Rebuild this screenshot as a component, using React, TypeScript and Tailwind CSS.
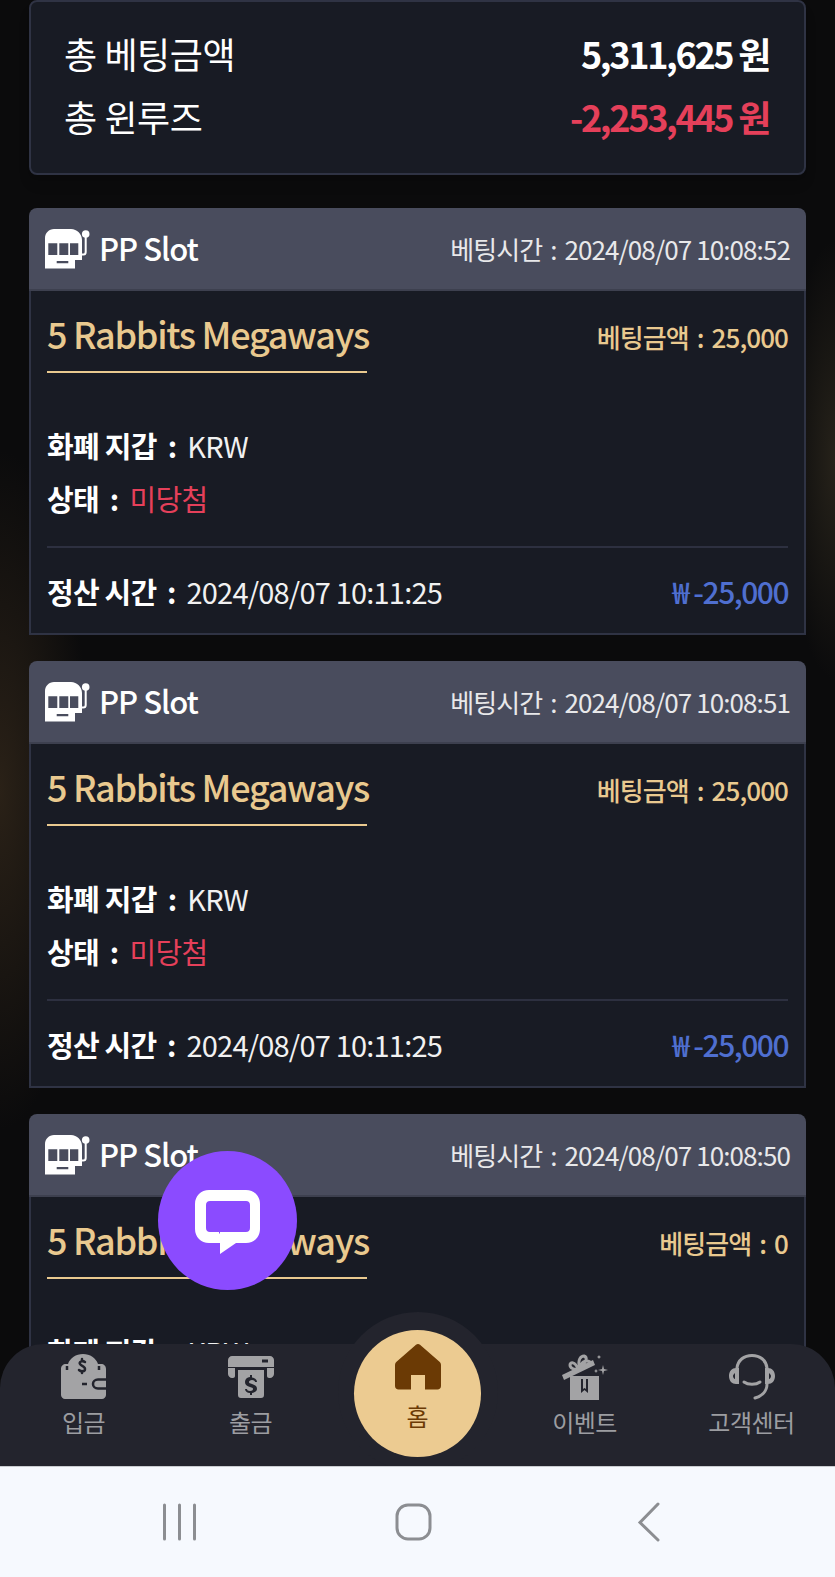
const font = "font-['Noto_Sans_CJK_KR','Noto_Sans',sans-serif]";

const bets = [
  { time: "2024/08/07 10:08:52", amount: "25,000" },
  { time: "2024/08/07 10:08:51", amount: "25,000" },
  { time: "2024/08/07 10:08:50", amount: "0" },
];

function SlotIcon() {
  return (
    <svg width="46" height="40" viewBox="0 0 46 40" fill="none">
      <path
        fillRule="evenodd"
        fill="#fff"
        d="M9 0h17c6 0 11 5 11 11v20h-7v8.500H0V9c0-5 4-9 9-9zM3.300 14.300V26h9V14.300h-9zm11 0V26h9V14.300h-9zm10.700 0V26h8.300V14.300H25zM11.700 32v2.200h11.600V32H11.700z"
      />
      <circle cx="40.700" cy="5" r="3.800" fill="#fff" />
      <path d="M40.700 8v15c0 1.500-1 2.500-2.500 2.500H37" stroke="#fff" strokeWidth="2" />
    </svg>
  );
}

function WalletIcon() {
  return (
    <svg width="46" height="46" viewBox="0 0 46 46" fill="#a3a3a5">
      <path d="M22 0c7 0 13 4 15 10h3c3 0 5 2 5 5v26c0 2-2 4-4 4H4c-2 0-4-2-4-4V15c0-3 2-5 5-5h2C9 4 15 0 22 0z" />
      <path
        fill="none"
        stroke="#23242d"
        strokeWidth="2.500"
        strokeLinecap="round"
        d="M24 8c-3-2-6 0-5 2s5 2 5 5-4 3-6 1M21 5v2M21 17v2"
      />
      <path fill="none" stroke="#23242d" strokeWidth="2.500" d="M46 25.500H37c-3 0-5 2-5 4.500s2 4.500 5 4.500h9" />
      <path fill="none" stroke="#23242d" strokeWidth="2.500" d="M21 30h5M6 16v-4M38 16v-4" />
    </svg>
  );
}

function AtmIcon() {
  return (
    <svg width="46" height="42" viewBox="0 0 46 42" fill="#a3a3a5">
      <path
        fillRule="evenodd"
        d="M4 0h38c2 0 4 2 4 4v7H0V4c0-2 2-4 4-4zm30 3.500v3h6v-3h-6z"
      />
      <path d="M0 12h7v8c0 1-1 2-2 2H4c-2 0-4-2-4-4v-6zM39 12h7v6c0 2-2 4-4 4h-1c-1 0-2-1-2-2v-8z" />
      <path
        fillRule="evenodd"
        d="M10 14h26v25c0 2-1 3-3 3H13c-2 0-3-1-3-3V14zm12 5v2c-3 .500-5 2-5 5s2 4 5 5c2 .500 3 1 3 2s-1 2-3 2-3-1-3-2h-2c0 2 2 4 5 4v2h2v-2c3-.500 5-2 5-4 0-3-2-4-5-5-2-.500-3-1-3-2s1-2 3-2 3 1 3 2h2c0-2-2-4-5-4.500V19h-2z"
      />
    </svg>
  );
}

function GiftIcon() {
  return (
    <svg width="46" height="46" viewBox="0 0 46 46" fill="#a3a3a5">
      <path
        fillRule="evenodd"
        d="M8 22h29v24H8V22zm11 3v14l3.500-3 3.500 3V25h-2v10l-1.500-1-1.500 1V25h-2z"
      />
      <path d="M0 21l31-15 2 5-31 15z" />
      <path
        fill="none"
        stroke="#a3a3a5"
        strokeWidth="3"
        d="M16 15c-4 1-8-1-8-4s5-4 8 4zm2-2c-3-7 1-11 4-11 3 1 4 6-4 11zm1-1c1-5 6-6 9-4 1 2-1 5-9 4z"
      />
      <path d="M41 11l1 4 4 1-4 1-1 4-1-4-4-1 4-1zM34 15l.800 1.500 1.200.500-1.200.500L34 19l-.800-1.500L32 17l1.200-.500zM37 1l.700 1.300L39 3l-1.300.700L37 5l-.700-1.300L35 3l1.300-.700z" />
    </svg>
  );
}

function HeadsetIcon() {
  return (
    <svg width="46" height="46" viewBox="0 0 46 46" fill="none" stroke="#a3a3a5" strokeWidth="3" strokeLinecap="round">
      <path d="M8 14C9 6 15 1.500 23 1.500S37 6 38 14" />
      <path d="M15 28c4 3 12 3 16 0" />
      <path d="M38 30c0 7-5 12-12 14" />
      <path
        fill="#a3a3a5"
        stroke="none"
        fillRule="evenodd"
        d="M7 14h3v16H7c-4 0-7-3-7-8s3-8 7-8zm-1 5c-1 1-2 2-2 3s1 3 2 3v-6zM36 14h3c4 0 7 3 7 8s-3 8-7 8h-3V14zm4 5v6c1 0 2-2 2-3s-1-2-2-3z"
      />
    </svg>
  );
}

function HomeIcon() {
  return (
    <svg width="46" height="46" viewBox="0 0 46 46" fill="#6b3a05">
      <path
        fillRule="evenodd"
        d="M21 .800c1.200-1 2.800-1 4 0l19.500 17c1 1 1.500 2 1.500 3.500V42c0 2-1.500 3.500-3.500 3.500H30V31H16v14.500H3.500C1.500 45.500 0 44 0 42V21.300c0-1.500.500-2.500 1.500-3.500z"
      />
    </svg>
  );
}

function ChatIcon() {
  return (
    <svg width="66" height="66" viewBox="0 0 66 66" fill="none">
      <path
        fillRule="evenodd"
        fill="#fff"
        d="M14 0h37c8 0 14 6 14 14v25c0 8-6 14-14 14H41L25 64V53H14C6 53 0 47 0 39V14C0 6 6 0 14 0zm1 11c-2.500 0-4 1.500-4 4v23c0 2.500 1.500 4 4 4h9v1.500h1V42h26c2.500 0 4-1.500 4-4V15c0-2.500-1.500-4-4-4H15z"
      />
    </svg>
  );
}

function Colon({ gap }: { gap: string }) {
  return <span className={gap}>:</span>;
}

function BetCard({ time, amount }: { time: string; amount: string }) {
  return (
    <div className="mb-[26px]">
      <div className="flex h-[83px] items-center justify-between rounded-t-lg border-b-2 border-[#3d404f] bg-[#494c5d] pr-[16px] pl-[16px]">
        <div className="flex items-center gap-[8px]">
          <SlotIcon />
          <span className="text-[31px] font-medium tracking-[-1px] text-white">PP Slot</span>
        </div>
        <span className="text-[26px] tracking-[-0.9px] text-[#e8e8ea]">
          베팅시간 <Colon gap="mx-[3px]" /> {time}
        </span>
      </div>
      <div className="h-[344px] border-2 border-t-0 border-[#2f3344] bg-[#181b24] px-[16px]">
        <div className="flex items-start justify-between">
          <h3 className="mt-[15px] w-[320px] border-b-2 border-[#e9c98f] pb-[11px] text-[36px] leading-[54px] font-medium tracking-[-1.3px] whitespace-nowrap text-[#e9c98f]">
            5 Rabbits Megaways
          </h3>
          <span className="mt-[26px] text-[26px] font-medium tracking-[-0.9px] text-[#e9c98f]">
            베팅금액 <Colon gap="mx-[3px]" /> {amount}
          </span>
        </div>
        <div className="mt-[46px] text-[29px] leading-[53px] tracking-[-0.7px] text-[#f1f1f1]">
          <p>
            <b className="font-bold text-white">
              화폐 지갑 <Colon gap="mx-[5px]" />{" "}
            </b>
            KRW
          </p>
          <p>
            <b className="font-bold text-white">
              상태 <Colon gap="mx-[5px]" />{" "}
            </b>
            <span className="text-[#e5405a]">미당첨</span>
          </p>
        </div>
        <div className="mt-[21px] flex h-[89px] items-center justify-between border-t-2 border-[#2d3040] text-[29px] tracking-[-0.8px] text-[#f1f1f1]">
          <p>
            <b className="font-bold text-white">
              정산 시간 <Colon gap="mx-[5px]" />{" "}
            </b>
            2024/08/07 10:11:25
          </p>
          <span className="text-[30px] font-medium tracking-[-1.5px] text-[#4f6fd0]">₩ -25,000</span>
        </div>
      </div>
    </div>
  );
}

function NavItem({ icon, label }: { icon: React.ReactNode; label: string }) {
  return (
    <div className="flex w-[167px] flex-col items-center">
      <div className="flex h-[46px] items-center">{icon}</div>
      <span className="mt-[5px] text-[24px] leading-[34px] tracking-[-0.5px] text-[#9c9da1]">{label}</span>
    </div>
  );
}

export default function App() {
  return (
    <div className={`${font} flex h-[1577px] w-[835px] flex-col overflow-hidden bg-[#0b0b0c]`}>
      <div className="relative h-[1466px] overflow-hidden bg-[radial-gradient(ellipse_90px_340px_at_0px_790px,#2a2117,transparent),radial-gradient(ellipse_50px_220px_at_835px_460px,#26221a,transparent)]">
        <div className="px-[29px]">
          <div className="mb-[33px] flex h-[175px] flex-col justify-center gap-[10px] rounded-lg border-2 border-[#2f3344] bg-[#181b24] px-[33px] pt-[3px] pb-[9px] shadow-lg">
            <div className="flex items-center justify-between text-[36px] leading-[53px] text-white">
              <span className="tracking-[-0.4px]">총 베팅금액</span>
              <span className="mr-[2px] font-bold tracking-[-2.3px]">5,311,625 원</span>
            </div>
            <div className="flex items-center justify-between text-[36px] leading-[53px] text-white">
              <span className="tracking-[-0.4px]">총 윈루즈</span>
              <span className="mr-[2px] font-bold tracking-[-2.3px] text-[#e5405a]">-2,253,445 원</span>
            </div>
          </div>
          {bets.map((bet) => (
            <BetCard key={bet.time} time={bet.time} amount={bet.amount} />
          ))}
        </div>

        {/* floating chat button */}
        <div className="absolute top-[1151px] left-[158px] z-20 flex h-[139px] w-[139px] items-center justify-center rounded-full bg-[#8b4bff] pt-[4px]">
          <ChatIcon />
        </div>

        {/* bottom nav */}
        <div className="absolute right-0 bottom-0 left-0 z-10 flex h-[122px] items-start justify-between rounded-t-[44px] bg-[#23242d] pt-[10px]">
          <NavItem icon={<WalletIcon />} label="입금" />
          <NavItem icon={<AtmIcon />} label="출금" />
          <div className="w-[167px]" />
          <NavItem icon={<GiftIcon />} label="이벤트" />
          <NavItem icon={<HeadsetIcon />} label="고객센터" />
        </div>
        <div className="absolute top-[1312px] left-[338px] z-10 h-[160px] w-[160px] rounded-full bg-[#23242d]" />
        <div className="absolute top-[1330px] left-[354px] z-10 flex h-[127px] w-[127px] flex-col items-center rounded-full bg-[#eccb91] pt-[14px]">
          <HomeIcon />
          <span className="mt-[9px] text-[24px] leading-[34px] text-[#6b3a05]">홈</span>
        </div>
      </div>

      {/* android nav bar */}
      <div className="h-[111px] border-t border-[#c9ccd0] bg-[#f6f9fe]">
        <svg width="835" height="110" viewBox="0 0 835 110" fill="none" stroke="#8c8e92" strokeLinecap="round">
          <path d="M164.500 38v34M179.500 38v34M194.500 38v34" strokeWidth="3" />
          <rect x="397" y="38" width="33" height="34" rx="11" strokeWidth="3" />
          <path d="M658 37 L640 55.500 L658 73" strokeWidth="3" />
        </svg>
      </div>
    </div>
  );
}
